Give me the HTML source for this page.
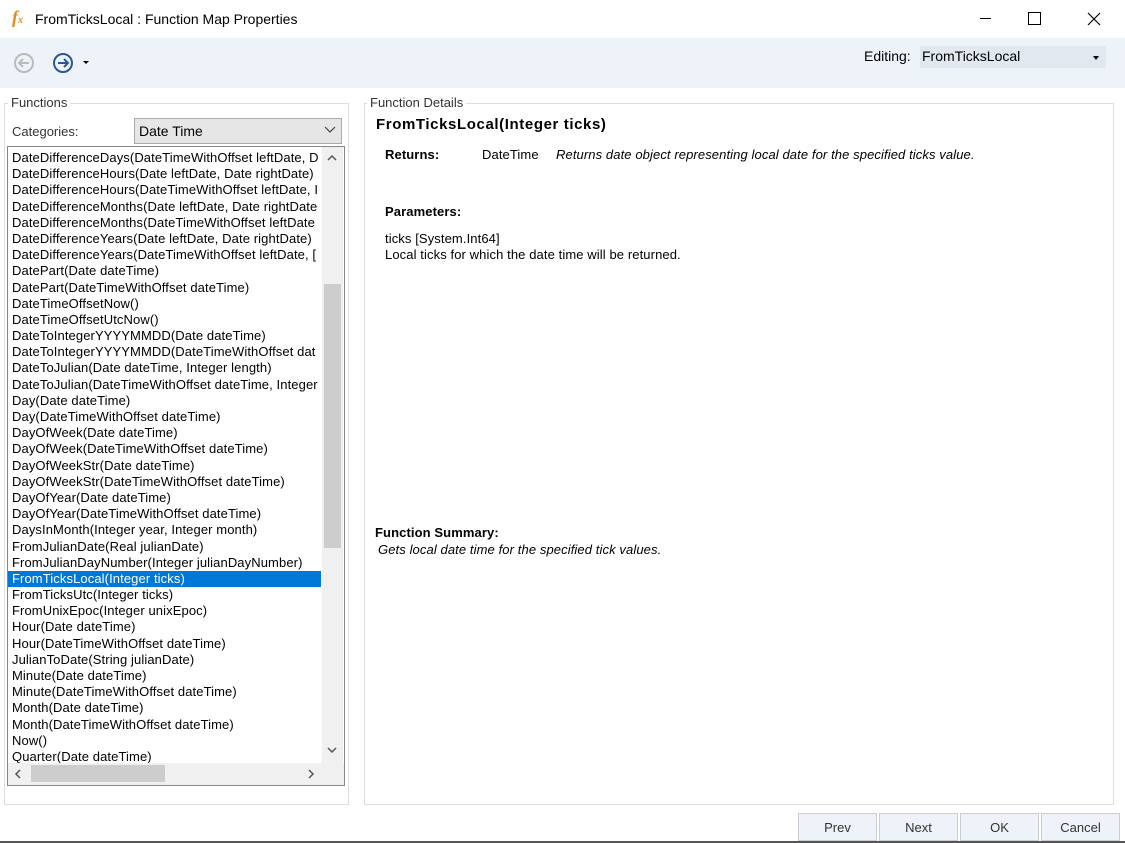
<!DOCTYPE html>
<html><head><style>
body{margin:0;width:1125px;height:843px;background:#fff;font-family:"Liberation Sans",sans-serif;position:relative;overflow:hidden;color:#000}
.a{position:absolute}
.t{font-size:13px;letter-spacing:0.1px;white-space:nowrap}
.list div{height:16.2px;line-height:16.2px;padding-left:4px}
.btn{position:absolute;top:813px;width:79px;height:28px;background:#eef3f9;border:1px solid #c9ced6;box-sizing:border-box;font-size:13px;text-align:center;line-height:28px;color:#333}
</style></head><body>
<div class="a" style="left:12px;top:7px;font-size:18px;font-style:italic;color:#e08a1e;font-family:'Liberation Serif',serif;font-weight:bold">f<span style="font-size:10px">x</span></div>
<div class="a" style="left:35px;top:11px;font-size:14px">FromTicksLocal : Function Map Properties</div>
<div class="a" style="left:980px;top:18px;width:11px;height:1px;background:#000"></div>
<div class="a" style="left:1028px;top:12px;width:11px;height:11px;border:1px solid #000"></div>
<svg class="a" style="left:1087px;top:12px" width="14" height="14"><path d="M1 1l12 12M13 1L1 13" stroke="#000" stroke-width="1.2"/></svg>
<div class="a" style="left:0;top:38px;width:1125px;height:50px;background:#eef3f9"></div>
<svg class="a" style="left:12px;top:51px" width="90" height="24"><circle cx="12" cy="12" r="9" fill="none" stroke="#bbb" stroke-width="2"/><path d="M17 12H8M11 8l-4 4 4 4" fill="none" stroke="#bbb" stroke-width="2"/><circle cx="51" cy="12" r="9" fill="none" stroke="#2b5797" stroke-width="2"/><path d="M46 12h9M52 8l4 4-4 4" fill="none" stroke="#2b5797" stroke-width="2"/><path d="M71 10h6l-3 3z" fill="#000"/></svg>
<div class="a" style="left:864px;top:48px;font-size:14px">Editing:</div>
<div class="a" style="left:920px;top:46px;width:186px;height:22px;background:#e1e8f0"></div>
<div class="a" style="left:922px;top:48px;font-size:14px">FromTicksLocal</div>
<div class="a" style="left:1093px;top:56px;border:3.5px solid transparent;border-top:4px solid #000"></div>
<div class="a" style="left:4px;top:103px;width:343px;height:700px;border:1px solid #ddd"></div>
<div class="a" style="left:8px;top:95px;background:#fff;padding:0 3px;font-size:13px;color:#333">Functions</div>
<div class="a" style="left:12px;top:124px;font-size:13px;color:#333">Categories:</div>
<div class="a" style="left:134px;top:118px;width:206px;height:24px;background:#e6e6e6;border:1px solid #aaa"></div>
<div class="a" style="left:139px;top:123px;font-size:14px">Date Time</div>
<svg class="a" style="left:324px;top:126px" width="12" height="8"><path d="M1 1l5 5 5-5" fill="none" stroke="#444" stroke-width="1.2"/></svg>
<div class="a" style="left:7px;top:146px;width:336px;height:638px;border:1px solid #888;overflow:hidden">
<div class="list t" style="position:absolute;left:0;top:3px;width:313px;overflow:hidden">
<div>DateDifferenceDays(DateTimeWithOffset leftDate, D</div><div>DateDifferenceHours(Date leftDate, Date rightDate)</div><div>DateDifferenceHours(DateTimeWithOffset leftDate, I</div><div>DateDifferenceMonths(Date leftDate, Date rightDate</div><div>DateDifferenceMonths(DateTimeWithOffset leftDate</div><div>DateDifferenceYears(Date leftDate, Date rightDate)</div><div>DateDifferenceYears(DateTimeWithOffset leftDate, [</div><div>DatePart(Date dateTime)</div><div>DatePart(DateTimeWithOffset dateTime)</div><div>DateTimeOffsetNow()</div><div>DateTimeOffsetUtcNow()</div><div>DateToIntegerYYYYMMDD(Date dateTime)</div><div>DateToIntegerYYYYMMDD(DateTimeWithOffset dat</div><div>DateToJulian(Date dateTime, Integer length)</div><div>DateToJulian(DateTimeWithOffset dateTime, Integer</div><div>Day(Date dateTime)</div><div>Day(DateTimeWithOffset dateTime)</div><div>DayOfWeek(Date dateTime)</div><div>DayOfWeek(DateTimeWithOffset dateTime)</div><div>DayOfWeekStr(Date dateTime)</div><div>DayOfWeekStr(DateTimeWithOffset dateTime)</div><div>DayOfYear(Date dateTime)</div><div>DayOfYear(DateTimeWithOffset dateTime)</div><div>DaysInMonth(Integer year, Integer month)</div><div>FromJulianDate(Real julianDate)</div><div>FromJulianDayNumber(Integer julianDayNumber)</div><div style="background:#0078d7;color:#fff">FromTicksLocal(Integer ticks)</div><div>FromTicksUtc(Integer ticks)</div><div>FromUnixEpoc(Integer unixEpoc)</div><div>Hour(Date dateTime)</div><div>Hour(DateTimeWithOffset dateTime)</div><div>JulianToDate(String julianDate)</div><div>Minute(Date dateTime)</div><div>Minute(DateTimeWithOffset dateTime)</div><div>Month(Date dateTime)</div><div>Month(DateTimeWithOffset dateTime)</div><div>Now()</div><div>Quarter(Date dateTime)</div>
</div>
<div class="a" style="left:314px;top:0;width:21px;height:616px;background:#f0f0f0"></div>
<div class="a" style="left:316px;top:137px;width:17px;height:264px;background:#cdcdcd"></div>
<svg class="a" style="left:318px;top:6px" width="12" height="8"><path d="M2 7l4-4 4 4" fill="none" stroke="#555" stroke-width="1.5"/></svg>
<svg class="a" style="left:318px;top:600px" width="12" height="8"><path d="M2 1l4 4 4-4" fill="none" stroke="#555" stroke-width="1.5"/></svg>
<div class="a" style="left:0;top:616px;width:336px;height:22px;background:#f0f0f0"></div>
<div class="a" style="left:23px;top:618px;width:134px;height:17px;background:#cdcdcd"></div>
<svg class="a" style="left:6px;top:621px" width="8" height="12"><path d="M6 2L2 6l4 4" fill="none" stroke="#555" stroke-width="1.5"/></svg>
<svg class="a" style="left:299px;top:621px" width="8" height="12"><path d="M2 2l4 4-4 4" fill="none" stroke="#555" stroke-width="1.5"/></svg>
</div>
<div class="a" style="left:364px;top:103px;width:748px;height:700px;border:1px solid #ddd"></div>
<div class="a" style="left:367px;top:95px;background:#fff;padding:0 3px;font-size:13px;color:#333">Function Details</div>
<div class="a" style="left:376px;top:116px;font-size:15px;font-weight:bold;letter-spacing:0.6px">FromTicksLocal(Integer ticks)</div>
<div class="a t" style="left:385px;top:147px;font-weight:bold">Returns:</div>
<div class="a t" style="left:482px;top:147px">DateTime</div>
<div class="a t" style="left:556px;top:147px;font-style:italic">Returns date object representing local date for the specified ticks value.</div>
<div class="a t" style="left:385px;top:204px;font-weight:bold">Parameters:</div>
<div class="a t" style="left:385px;top:231px">ticks [System.Int64]</div>
<div class="a t" style="left:385px;top:247px">Local ticks for which the date time will be returned.</div>
<div class="a t" style="left:375px;top:525px;font-weight:bold">Function Summary:</div>
<div class="a t" style="left:378px;top:542px;font-style:italic">Gets local date time for the specified tick values.</div>
<div class="btn" style="left:798px">Prev</div>
<div class="btn" style="left:879px">Next</div>
<div class="btn" style="left:960px">OK</div>
<div class="btn" style="left:1041px">Cancel</div>
<div class="a" style="left:0;top:841px;width:1125px;height:2px;background:#555"></div>
</body></html>
